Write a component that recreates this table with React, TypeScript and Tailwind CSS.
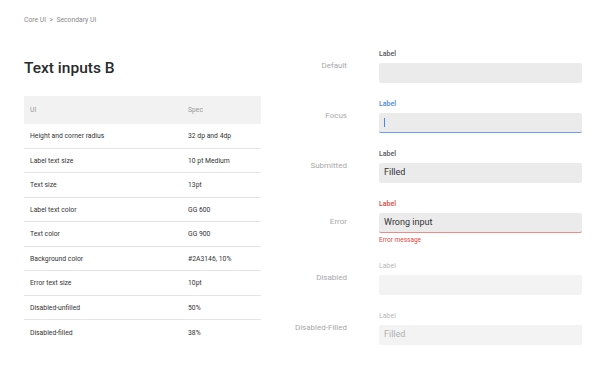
import React from 'react';

const rows: [string, string][] = [
  ['Height and corner radius', '32 dp and 4dp'],
  ['Label text size', '10 pt Medium'],
  ['Text size', '13pt'],
  ['Label text color', 'GG 600'],
  ['Text color', 'GG 900'],
  ['Background color', '#2A3146, 10%'],
  ['Error text size', '10pt'],
  ['Disabled-unfilled', '50%'],
  ['Disabled-filled', '38%'],
];

type State = 'default' | 'focus' | 'submitted' | 'error' | 'disabled' | 'disabledFilled';

const states: { name: string; state: State }[] = [
  { name: 'Default', state: 'default' },
  { name: 'Focus', state: 'focus' },
  { name: 'Submitted', state: 'submitted' },
  { name: 'Error', state: 'error' },
  { name: 'Disabled', state: 'disabled' },
  { name: 'Disabled-Filled', state: 'disabledFilled' },
];

function Field({ state }: { state: State }) {
  const disabled = state === 'disabled' || state === 'disabledFilled';
  const labelColor =
    state === 'focus' ? 'text-[#4a86e8]' : state === 'error' ? 'text-[#e8453c]' : disabled ? 'text-[#b8b8b8] font-normal' : 'text-[#555]';
  const box = disabled ? 'bg-[#f3f3f4]' : 'bg-[#ebebec]';
  const border =
    state === 'focus' ? 'border-b-[1.5px] border-[#6a9cf0]' : state === 'error' ? 'border-b-[1.5px] border-[#ee8a84]' : '';
  return (
    <div className="flex flex-col">
      <div className={`h-[10px] text-[7px] leading-[10px] font-medium ${labelColor}`}>Label</div>
      <div className={`mt-[4px] h-[20px] w-[203px] rounded-[2px] ${box} ${border} flex items-center pl-[5px] text-[9px]`}>
        {state === 'focus' && <div className="h-[9px] w-[1px] bg-[#4a86e8]" />}
        {state === 'submitted' && <span className="text-[#333]">Filled</span>}
        {state === 'error' && <span className="text-[#333]">Wrong input</span>}
        {state === 'disabledFilled' && <span className="text-[#b0b0b0]">Filled</span>}
      </div>
      {state === 'error' && <div className="mt-[2px] text-[6.5px] leading-[10px] text-[#e8453c]">Error message</div>}
    </div>
  );
}

export default function App() {
  return (
    <div className="h-[369px] w-[600px] overflow-hidden bg-white font-['Roboto',sans-serif]">
      <div className="flex">
        <div className="ml-[24px] w-[242px]">
          <div className="pt-[16px] text-[6.8px] leading-[8px] text-[#888]">Core UI&nbsp;&nbsp;&gt;&nbsp;&nbsp;Secondary UI</div>
          <h1 className="mt-[34px] text-[15.5px] leading-[20px] font-medium text-[#2a2a2a]">Text inputs B</h1>
          <div className="mt-[18px] w-[237px]">
            <div className="flex h-[28px] items-center bg-[#f2f2f2] text-[6.8px] text-[#999]">
              <div className="w-[164px] pl-[6px]">UI</div>
              <div>Spec</div>
            </div>
            {rows.map(([ui, spec], i) => (
              <div
                key={ui}
                className={`flex h-[24.5px] items-center pt-[1px] text-[6.8px] text-[#333] ${i < rows.length - 1 ? 'border-b border-[#e4e4e4]' : ''}`}
              >
                <div className="w-[164px] pl-[6px]">{ui}</div>
                <div>{spec}</div>
              </div>
            ))}
          </div>
        </div>
        <div className="flex flex-col gap-[16px] pt-[49px]">
          {states.map(s => (
            <div key={s.name} className="flex items-center">
              <div className="w-[81px] text-right text-[8px] text-[#a8a8a8]">{s.name}</div>
              <div className="ml-[32px]">
                <Field state={s.state} />
              </div>
            </div>
          ))}
        </div>
      </div>
    </div>
  );
}
